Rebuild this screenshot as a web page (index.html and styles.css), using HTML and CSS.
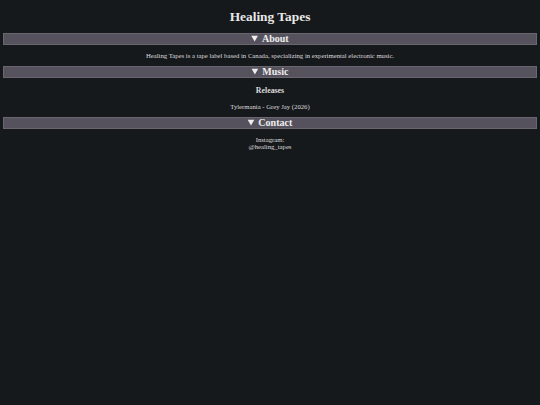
FILE: index.html
```html
<!DOCTYPE html>
<html>
<head>
    <title>Healing Tapes</title>
    <link rel="stylesheet" href="styles.css">
</head>
<body>
    <h1>Healing Tapes</h1>

    <details open>
        <summary>About</summary>
        <p>Healing Tapes is a tape label based in Canada, specializing in experimental electronic music.</p>
    </details>

    <details open>
        <summary>Music</summary>
        <h3>Releases</h3>
        <p>Tylermania - Grey Jay (2026)</p>
    </details>

    <details open>
        <summary>Contact</summary>
        <p>Instagram:<br>@healing_tapes</p>
    </details>
</body>
</html>
```

FILE: styles.css
```css
body {
    margin: 0 3px;
    background-color: #16191c;
    color: #dcdcdc;
    font-family: "Liberation Serif", "Times New Roman", serif;
    font-size: 6.7px;
    text-align: center;
}

h1 {
    margin: 9px 0 8px;
    color: #e8e8e8;
    font-size: 2em;
}

summary {
    background-color: #56525d;
    border: 1px solid #6a6670;
    color: #eeeeee;
    font-size: 1.5em;
    font-weight: bold;
    line-height: 10px;
    cursor: pointer;
}

p {
    margin: 7px 0;
}

h3 {
    font-size: 1.17em;
}
```
